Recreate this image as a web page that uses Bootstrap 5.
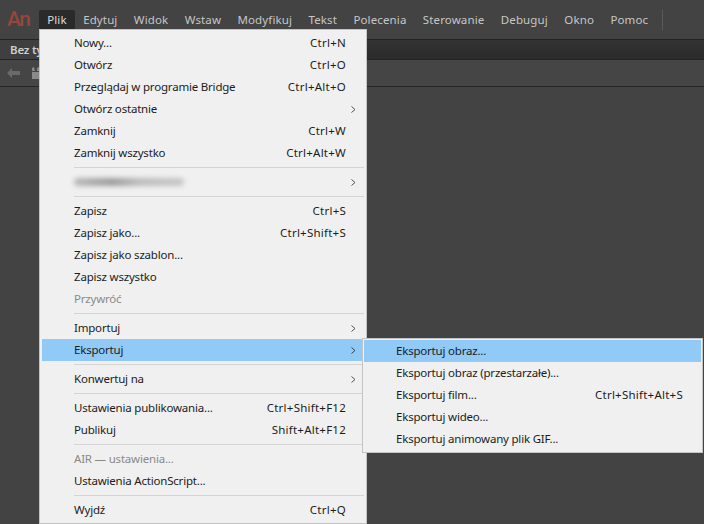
<!DOCTYPE html>
<html lang="pl">
<head>
<meta charset="utf-8">
<title>Animate</title>
<link rel="stylesheet" href="https://cdn.jsdelivr.net/npm/bootstrap@5.3.0/dist/css/bootstrap.min.css">
<style>
html,body{height:100%;}
body{background:#434343;font-family:"Noto Sans","Open Sans","Liberation Sans",sans-serif;font-size:11.5px;letter-spacing:-.2px;color:#1c1c1c;overflow:hidden;}
.app-shell{position:relative;width:704px;height:524px;overflow:hidden;}
.top-bar{height:39px;background:#434343;padding:10px 0 0 7px;}
.app-logo{width:32px;font-family:"Roboto",sans-serif;font-weight:500;font-size:21px;line-height:19px;letter-spacing:-1.4px;color:#96473a;}
.top-item{height:19px;line-height:20px;padding:0 8.2px;color:#c6c6c6;letter-spacing:.13px;white-space:nowrap;}
.top-item.is-open{background:#2a2a2a;color:#dcdcdc;border-radius:2px 2px 0 0;}
.top-rule{width:1px;height:20px;background:#5a5a5a;margin:0 0 0 6px;}
.tab-strip{height:21px;background:linear-gradient(#333,#2b2b2b);border-top:1px solid #232323;border-bottom:1px solid #232323;}
.doc-tab{height:19px;width:90px;padding-left:10px;line-height:20px;background:#3f3f3f;color:#cfcfcf;font-weight:600;white-space:nowrap;}
.tool-strip{height:27px;background:#454545;border-bottom:1px solid #262626;padding-left:7px;gap:10px;}
.main-menu,.sub-menu{position:absolute;background:#f0f0f0;border:1px solid #c4c4c4;padding:2px;}
.main-menu{left:39px;top:29px;width:328px;}
.sub-menu{left:320px;top:-1px;width:341px;padding:1px 1px 2px;}
.menu-row{position:relative;height:22px;line-height:22px;padding:0 18px 0 32px;white-space:nowrap;}
.menu-key{letter-spacing:.24px;}
.menu-row.is-active{background:#91c9f7;}
.menu-row.is-off{color:#8a8a8a;}
.menu-arrow{position:absolute;right:7px;top:8px;width:7px;height:7px;}
.menu-gap{height:7px;padding-top:3px;margin-left:32px;}
.menu-gap i{display:block;height:1px;background:#d4d4d4;}
.blur-line{padding-top:7px;}
.blur-text{display:block;width:110px;height:8px;border-radius:4px;background:linear-gradient(90deg,#b8b8b8,#9c9c9c 35%,#bcbcbc 60%,#c6c6c6);filter:blur(2.5px);}
</style>
</head>
<body>
<div class="app-shell">
  <div class="top-bar d-flex align-items-start">
    <div class="app-logo">An</div>
    <div class="top-item is-open">Plik</div>
    <div class="top-item">Edytuj</div>
    <div class="top-item">Widok</div>
    <div class="top-item">Wstaw</div>
    <div class="top-item">Modyfikuj</div>
    <div class="top-item">Tekst</div>
    <div class="top-item">Polecenia</div>
    <div class="top-item">Sterowanie</div>
    <div class="top-item">Debuguj</div>
    <div class="top-item">Okno</div>
    <div class="top-item">Pomoc</div>
    <div class="top-rule"></div>
  </div>
  <div class="tab-strip"><div class="doc-tab">Bez tytułu-1</div></div>
  <div class="tool-strip d-flex align-items-center">
    <svg width="14" height="10" viewBox="0 0 14 10"><path d="M0 5 5 0v3h8v4H5v3z" fill="#6a6a6a"/></svg>
    <svg width="12" height="12" viewBox="0 0 12 12"><path d="M1 5h9v7H1zM1 1l2-1 1 4H1zM6 1l2-1 1 4H6z" fill="#8a8a8a"/></svg>
  </div>

  <div class="main-menu">
    <div class="menu-row d-flex justify-content-between"><span>Nowy...</span><span class="menu-key">Ctrl+N</span></div>
    <div class="menu-row d-flex justify-content-between"><span>Otwórz</span><span class="menu-key">Ctrl+O</span></div>
    <div class="menu-row d-flex justify-content-between"><span>Przeglądaj w programie Bridge</span><span class="menu-key">Ctrl+Alt+O</span></div>
    <div class="menu-row d-flex justify-content-between"><span>Otwórz ostatnie</span><svg class="menu-arrow" viewBox="0 0 7 7"><path d="M1.5 .5 5 3.5 1.5 6.5" fill="none" stroke="#555"/></svg></div>
    <div class="menu-row d-flex justify-content-between"><span>Zamknij</span><span class="menu-key">Ctrl+W</span></div>
    <div class="menu-row d-flex justify-content-between"><span>Zamknij wszystko</span><span class="menu-key">Ctrl+Alt+W</span></div>
    <div class="menu-gap"><i></i></div>
    <div class="menu-row blur-line"><span class="blur-text"></span><svg class="menu-arrow" viewBox="0 0 7 7"><path d="M1.5 .5 5 3.5 1.5 6.5" fill="none" stroke="#555"/></svg></div>
    <div class="menu-gap"><i></i></div>
    <div class="menu-row d-flex justify-content-between"><span>Zapisz</span><span class="menu-key">Ctrl+S</span></div>
    <div class="menu-row d-flex justify-content-between"><span>Zapisz jako...</span><span class="menu-key">Ctrl+Shift+S</span></div>
    <div class="menu-row"><span>Zapisz jako szablon...</span></div>
    <div class="menu-row"><span>Zapisz wszystko</span></div>
    <div class="menu-row is-off"><span>Przywróć</span></div>
    <div class="menu-gap"><i></i></div>
    <div class="menu-row"><span>Importuj</span><svg class="menu-arrow" viewBox="0 0 7 7"><path d="M1.5 .5 5 3.5 1.5 6.5" fill="none" stroke="#555"/></svg></div>
    <div class="menu-row is-active"><span>Eksportuj</span><svg class="menu-arrow" viewBox="0 0 7 7"><path d="M1.5 .5 5 3.5 1.5 6.5" fill="none" stroke="#444"/></svg>
      <div class="sub-menu">
        <div class="menu-row is-active"><span>Eksportuj obraz...</span></div>
        <div class="menu-row"><span>Eksportuj obraz (przestarzałe)...</span></div>
        <div class="menu-row d-flex justify-content-between"><span>Eksportuj film...</span><span class="menu-key">Ctrl+Shift+Alt+S</span></div>
        <div class="menu-row"><span>Eksportuj wideo...</span></div>
        <div class="menu-row"><span>Eksportuj animowany plik GIF...</span></div>
      </div>
    </div>
    <div class="menu-gap"><i></i></div>
    <div class="menu-row"><span>Konwertuj na</span><svg class="menu-arrow" viewBox="0 0 7 7"><path d="M1.5 .5 5 3.5 1.5 6.5" fill="none" stroke="#555"/></svg></div>
    <div class="menu-gap"><i></i></div>
    <div class="menu-row d-flex justify-content-between"><span>Ustawienia publikowania...</span><span class="menu-key">Ctrl+Shift+F12</span></div>
    <div class="menu-row d-flex justify-content-between"><span>Publikuj</span><span class="menu-key">Shift+Alt+F12</span></div>
    <div class="menu-gap"><i></i></div>
    <div class="menu-row is-off"><span>AIR — ustawienia...</span></div>
    <div class="menu-row"><span>Ustawienia ActionScript...</span></div>
    <div class="menu-gap"><i></i></div>
    <div class="menu-row d-flex justify-content-between"><span>Wyjdź</span><span class="menu-key">Ctrl+Q</span></div>
  </div>
</div>
<script src="https://cdn.jsdelivr.net/npm/bootstrap@5.3.0/dist/js/bootstrap.bundle.min.js"></script>
</body>
</html>
